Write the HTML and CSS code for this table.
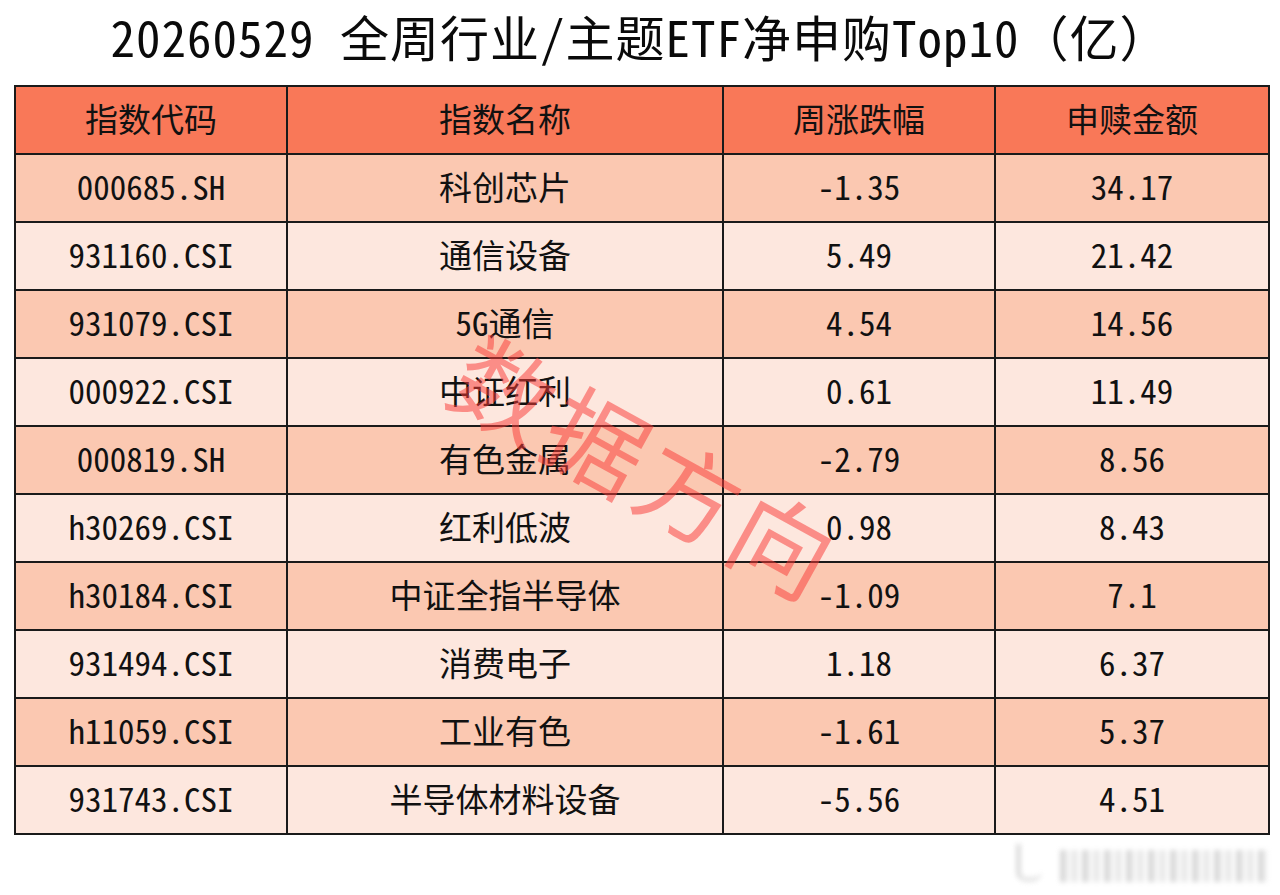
FILE: index.html
```html
<!DOCTYPE html>
<html lang="zh-CN">
<head>
<meta charset="utf-8">
<title>20260529 全周行业/主题ETF净申购Top10（亿）</title>
<link rel="stylesheet" href="styles.css">
</head>
<body>
<div class="page">
  <h1 class="title">20260529 全周行业/主题ETF净申购Top10（亿）</h1>
  <table class="etf">
    <colgroup>
      <col class="c1"><col class="c2"><col class="c3"><col class="c4">
    </colgroup>
    <thead>
      <tr><th>指数代码</th><th>指数名称</th><th>周涨跌幅</th><th>申赎金额</th></tr>
    </thead>
    <tbody>
      <tr class="odd"><td>000685.SH</td><td>科创芯片</td><td>-1.35</td><td>34.17</td></tr>
      <tr class="even"><td>931160.CSI</td><td>通信设备</td><td>5.49</td><td>21.42</td></tr>
      <tr class="odd"><td>931079.CSI</td><td>5G通信</td><td>4.54</td><td>14.56</td></tr>
      <tr class="even"><td>000922.CSI</td><td>中证红利</td><td>0.61</td><td>11.49</td></tr>
      <tr class="odd"><td>000819.SH</td><td>有色金属</td><td>-2.79</td><td>8.56</td></tr>
      <tr class="even"><td>h30269.CSI</td><td>红利低波</td><td>0.98</td><td>8.43</td></tr>
      <tr class="odd"><td>h30184.CSI</td><td>中证全指半导体</td><td>-1.09</td><td>7.1</td></tr>
      <tr class="even"><td>931494.CSI</td><td>消费电子</td><td>1.18</td><td>6.37</td></tr>
      <tr class="odd"><td>h11059.CSI</td><td>工业有色</td><td>-1.61</td><td>5.37</td></tr>
      <tr class="even"><td>931743.CSI</td><td>半导体材料设备</td><td>-5.56</td><td>4.51</td></tr>
    </tbody>
  </table>
  <div class="watermark">数据方向</div>
  <div class="sig"><span class="sig-icon"></span><span class="sig-bars"></span></div>
</div>
</body>
</html>
```

FILE: styles.css
```css
html, body {
  margin: 0;
  padding: 0;
  background: #ffffff;
}
body {
  width: 1280px;
  height: 895px;
  overflow: hidden;
  font-family: "Noto Sans Mono CJK SC", "Noto Sans CJK SC", "Liberation Mono", monospace;
  color: #111111;
}
.page {
  position: relative;
  width: 1280px;
  height: 895px;
  padding-top: 8px;
  box-sizing: border-box;
}
.title {
  margin: 0;
  height: 56px;
  line-height: 56px;
  font-size: 49px;
  letter-spacing: 1px;
  font-weight: normal;
  text-align: center;
  color: #0a0a0a;
  white-space: nowrap;
}
.etf {
  margin: 21px 0 0 14px;
  width: 1254px;
  border-collapse: collapse;
  table-layout: fixed;
}
.c1 { width: 272px; }
.c2 { width: 436px; }
.c3 { width: 272px; }
.c4 { width: 274px; }
.etf th, .etf td {
  border: 2px solid #1a1a1a;
  height: 62px;
  padding: 0 0 4px 0;
  text-align: center;
  vertical-align: middle;
  font-size: 33px;
  font-weight: normal;
  line-height: 1;
  white-space: nowrap;
}
.etf thead th {
  background: #f97858;
}
.odd td { background: #fbc8b1; }
.even td { background: #fde7de; }
.watermark {
  position: absolute;
  left: 433px;
  top: 410px;
  width: 430px;
  text-align: center;
  font-family: "Noto Sans CJK SC", sans-serif;
  font-size: 100px;
  line-height: 110px;
  letter-spacing: 6px;
  color: rgba(250, 60, 55, 0.52);
  transform: rotate(29deg);
  transform-origin: 50% 50%;
  white-space: nowrap;
  pointer-events: none;
}
.sig {
  position: absolute;
  left: 1016px;
  top: 842px;
  width: 252px;
  height: 40px;
  display: flex;
  align-items: flex-end;
  gap: 18px;
  filter: blur(2.5px);
  opacity: 0.7;
}
.sig-icon {
  width: 26px;
  height: 38px;
  border-left: 5px solid #cfcfcf;
  border-bottom: 5px solid #dcdcdc;
  border-radius: 0 0 10px 10px;
  box-sizing: border-box;
}
.sig-bars {
  flex: 1;
  height: 32px;
  background: repeating-linear-gradient(90deg, #c8c8c8 0 6px, #f3f3f3 6px 13px, #d6d6d6 13px 17px, #ffffff 17px 22px);
}
```
